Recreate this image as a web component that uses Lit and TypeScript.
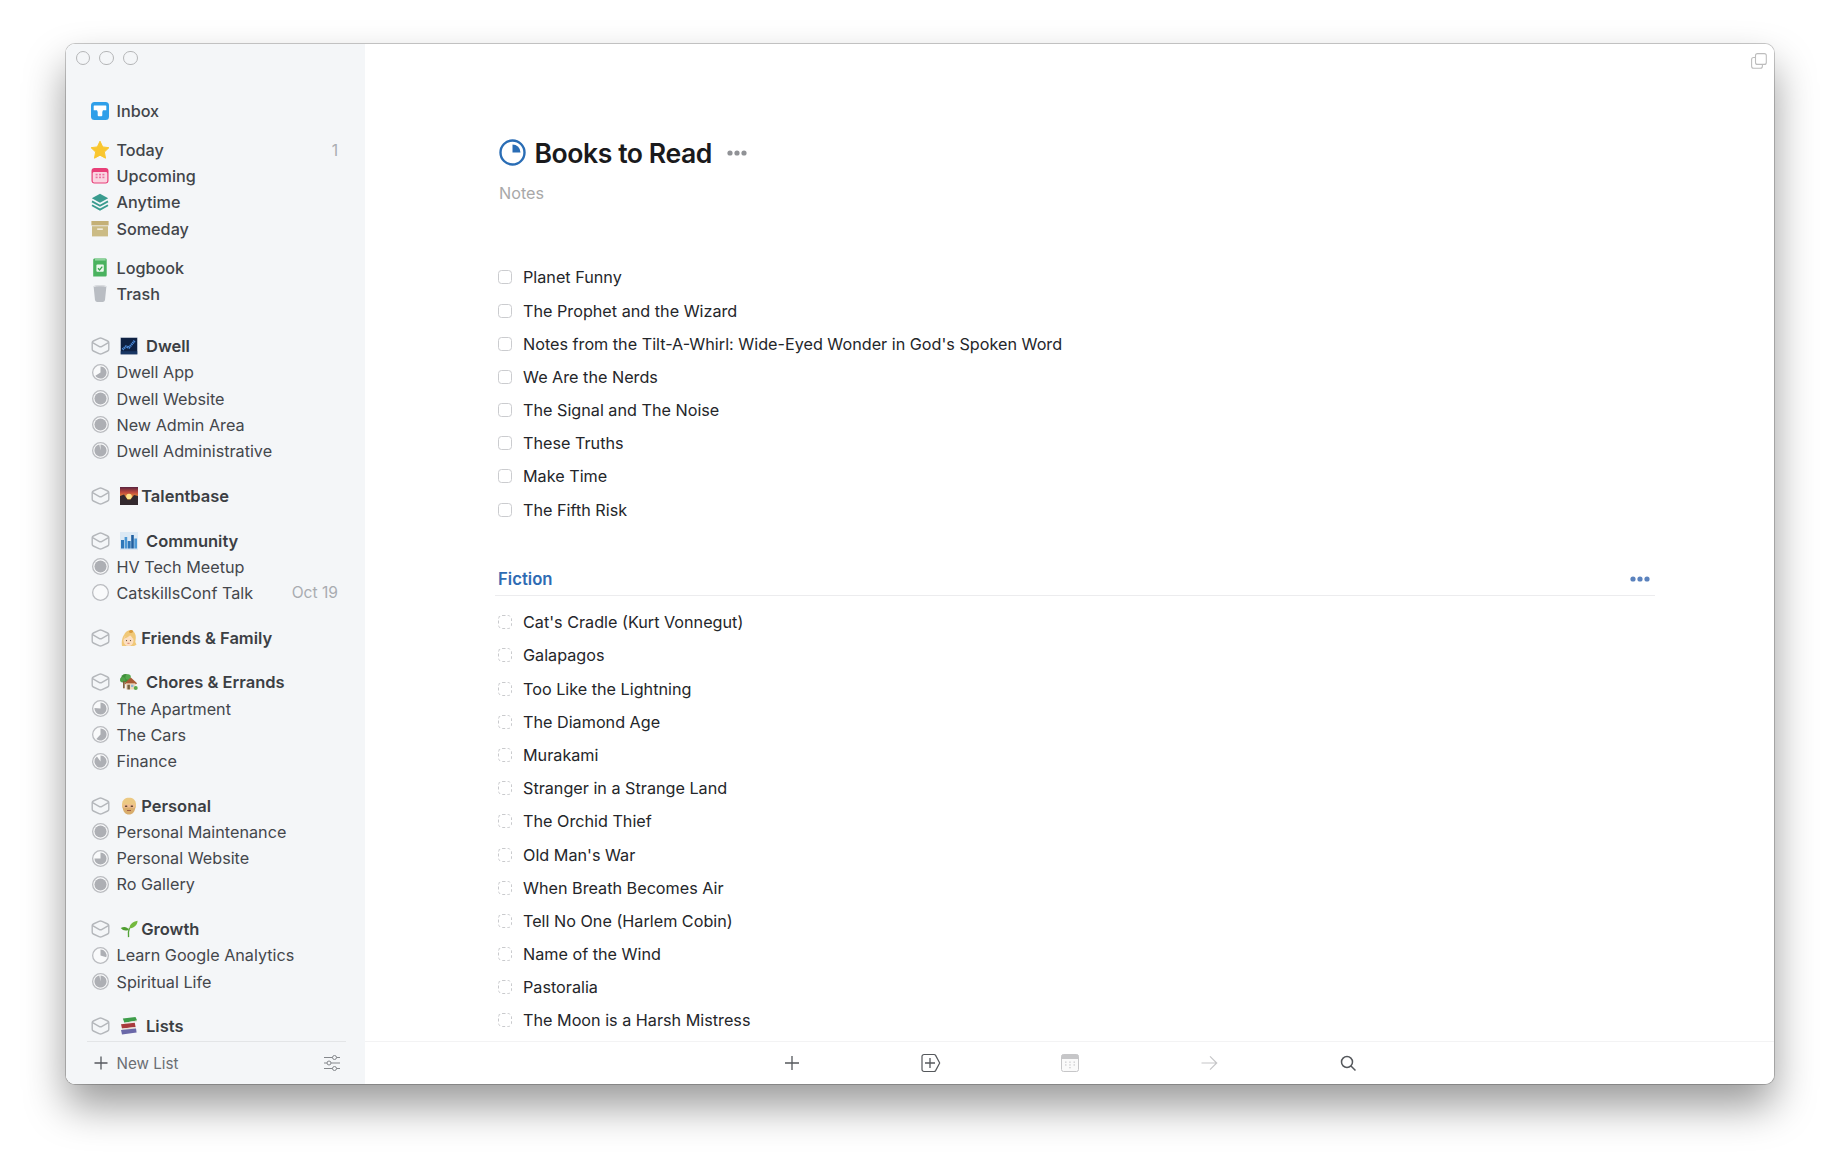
import { LitElement, html, css, svg } from "lit";
import { customElement } from "lit/decorators.js";

const pie = (p: number) => {
  const c = 8, r = 5.7;
  let fill;
  if (p >= 0.995) fill = svg`<circle cx="8" cy="8" r="5.7" fill="#adafb4"/>`;
  else if (p <= 0) fill = svg``;
  else {
    const a = 2 * Math.PI * p;
    const x = c + r * Math.sin(a), y = c - r * Math.cos(a);
    fill = svg`<path d="M8 8V${c - r}A${r} ${r} 0 ${p > 0.5 ? 1 : 0} 1 ${x.toFixed(2)} ${y.toFixed(2)}Z" fill="#adafb4"/>`;
  }
  return html`<svg class="ic16" viewBox="0 0 16 16"><circle cx="8" cy="8" r="7.4" fill="#f9fafb" stroke="#babcc0" stroke-width="1.2"/>${fill}</svg>`;
};

const cube = html`<svg class="cube" viewBox="0 0 19 18" fill="none" stroke="#b4b7bb" stroke-width="1.4" stroke-linejoin="round" stroke-linecap="round"><path d="M8 1.300a3.400 3.400 0 0 1 3 0l5.700 2.700a1.800 1.800 0 0 1 1.100 1.700v6.600a1.800 1.800 0 0 1-1.100 1.700L11 16.700a3.400 3.400 0 0 1-3 0l-5.700-2.700a1.800 1.800 0 0 1-1.100-1.700V5.700a1.800 1.800 0 0 1 1.100-1.700z"/><path d="M1.600 5.600 8 9.300a3 3 0 0 0 3 0l6.400-3.700"/></svg>`;

const navIcons: Record<string, unknown> = {
  inbox: html`<svg class="ic18" viewBox="0 0 18 18"><rect width="18" height="18" rx="3.5" fill="#2f9fe9"/><path d="M3.300 3.400h11.400a.6.6 0 0 1 .6.6v4.300h-3.300l-.7 1.600v3.400a1 1 0 0 1-1 1H7.700a1 1 0 0 1-1-1V9.900l-.7-1.600H2.700V4a.6.6 0 0 1 .6-.6z" fill="#fff"/></svg>`,
  today: html`<svg class="ic20" viewBox="0 0 20 20"><path d="M10 1.200l2.700 5.700 6.200.8-4.500 4.300 1.100 6.200L10 15.200l-5.500 3 1.100-6.200L1.100 7.700l6.200-.8z" fill="#f9c62f" stroke="#f9c62f" stroke-width="1" stroke-linejoin="round"/></svg>`,
  upcoming: html`<svg class="ic18" viewBox="0 0 18 18"><rect x=".5" y="1" width="17" height="15.600" rx="3" fill="#e83f78"/><rect x="1.700" y="5" width="14.600" height="10.400" rx="1.400" fill="#fad5e1"/><g fill="#eb74a2"><rect x="4.600" y="6.800" width="2" height="1.600"/><rect x="8" y="6.800" width="2" height="1.600"/><rect x="11.400" y="6.800" width="2" height="1.600"/><rect x="4.600" y="9.600" width="2" height="1.600"/><rect x="8" y="9.600" width="2" height="1.600"/><rect x="11.400" y="9.600" width="2" height="1.600"/></g></svg>`,
  anytime: html`<svg class="ic18" viewBox="0 0 18 18"><path d="M9 .8l8.200 4.500L9 9.800.8 5.300z" fill="#3a9c8f"/><path d="M1 8.400l8 4.300 8-4.300M1 12.200l8 4.400 8-4.400" fill="none" stroke="#3a9c8f" stroke-width="1.800"/></svg>`,
  someday: html`<svg class="ic18" viewBox="0 0 18 18"><rect x=".4" y="1" width="17.200" height="4.400" fill="#c4b077"/><rect x="1" y="6.200" width="16" height="10.200" fill="#cbbb85"/><rect x="6.200" y="8.400" width="5.600" height="1.500" fill="#f4f1e4"/></svg>`,
  logbook: html`<svg class="ic18t" viewBox="0 0 16 19"><path d="M2 .6h11.500a1.200 1.200 0 0 1 1.200 1.200v15.400a1.200 1.200 0 0 1-1.200 1.200H1.200V1.400z" fill="#4ab25f"/><path d="M3 .6h10.600v2H3z" fill="#8ed39c"/><rect x="4.400" y="6.400" width="7.400" height="7.400" rx="1" fill="#ecf8ee"/><path d="M6 10.200l1.600 1.700 2.700-3.200" fill="none" stroke="#3ba651" stroke-width="1.300"/></svg>`,
  trash: html`<svg class="ic18t" viewBox="0 0 16 18"><path d="M1.600 1.800C4 .4 12 .4 14.400 1.800L13 15.600a2 2 0 0 1-2 1.800H5a2 2 0 0 1-2-1.800z" fill="#b9bdc3"/><path d="M2 2c3-1 9-1 12 0" stroke="#e2e4e7" stroke-width="1" fill="none"/></svg>`,
};

const emoji: Record<string, unknown> = {
  dwell: html`<svg class="emo" viewBox="0 0 18 18"><rect width="18" height="18" fill="#dfe4ec"/><rect x=".8" y=".8" width="16.400" height="16.400" fill="#0e2143"/><path d="M2.500 12.500 6 9.500l3 1L15 3.500" stroke="#4c8ad8" stroke-width="2.400" fill="none" stroke-dasharray="1.300 .6"/><rect x=".8" y="14.200" width="16.400" height="3" fill="#183663"/></svg>`,
  talent: html`<svg class="emo" viewBox="0 0 18 18"><defs><linearGradient id="sk" x1="0" y1="0" x2="0" y2="1"><stop offset="0" stop-color="#5a2340"/><stop offset=".3" stop-color="#bf4a3c"/><stop offset=".65" stop-color="#f7a83a"/></linearGradient></defs><rect width="18" height="18" fill="url(#sk)"/><circle cx="9" cy="9.500" r="2.800" fill="#fde58a"/><path d="M0 9 4 7.500l3.500 5h3L14 8l4 1v9H0z" fill="#33292e"/></svg>`,
  city: html`<svg class="emo" viewBox="0 0 18 18"><rect width="18" height="18" fill="#dce9f4"/><g fill="#2f78b9"><rect x="1" y="8" width="3" height="8.500"/><rect x="4.600" y="5" width="2.600" height="11.500" fill="#4c98d5"/><rect x="7.700" y="9" width="3" height="7.500"/><rect x="11.200" y="3" width="2.600" height="13.500" fill="#205fa0"/><rect x="14.300" y="6.500" width="2.700" height="10" fill="#4c98d5"/></g></svg>`,
  woman: html`<svg class="emo" viewBox="0 0 18 18"><path d="M2 17C1.200 12 2.600 8 4 6 5.400 2.500 9 .4 12 1.600c2.600 1 4 4.400 3.800 7.400l-.5 4 1.200 2.800-2.500 1.200z" fill="#f0c878"/><path d="M8.800 2.500c1.500-1.800 3.400-1.800 4.300-.6.500 1-1.300 2.300-3.300 2.200z" fill="#d99c3f"/><ellipse cx="8.500" cy="11.500" rx="5" ry="5.500" fill="#fcdfc2"/><path d="M3.500 10C5.500 9.300 9 7.800 10.300 6l2.900 4-.5-5-4.700-1.500z" fill="#f0c878"/><circle cx="6.500" cy="11.600" r=".6" fill="#5a4030"/><circle cx="10.500" cy="11.600" r=".6" fill="#5a4030"/><path d="M7.400 14.300h2.200" stroke="#d0685a" stroke-width=".8"/></svg>`,
  house: html`<svg class="emo" viewBox="0 0 20 18"><circle cx="6" cy="4.800" r="4.800" fill="#3f8f3a"/><circle cx="3" cy="6.500" r="3" fill="#4ea247"/><circle cx="9" cy="3.500" r="3" fill="#55a84c"/><rect x="3.400" y="8" width="1.800" height="8" fill="#7b5a36"/><path d="M5 10.500 12 4l7 6.500-1.200 1H6z" fill="#a85b35"/><rect x="6.500" y="10.500" width="10.500" height="6.800" fill="#efd9bd"/><rect x="8.200" y="12" width="2.800" height="5.300" fill="#77603f"/><rect x="12.300" y="12" width="2.600" height="2.600" fill="#8fb7d6"/><circle cx="17.500" cy="15.600" r="2.200" fill="#5ba84c"/></svg>`,
  man: html`<svg class="emo" viewBox="0 0 18 18"><path d="M2 7.500C2.300 2.500 5.300.8 9 .8s6.700 1.700 7 6.700v3H2z" fill="#ecc983"/><path d="M3.400 7.800c3-.4 8-.4 11.200 0v3.200H3.400z" fill="#efbb90"/><path d="M2.500 9.800C2.900 14.800 5.500 17.600 9 17.600s6.100-2.800 6.500-7.800l-2.400 1.400c-.9-.8-7.300-.8-8.200 0z" fill="#d9ad6c"/><rect x="4.900" y="8.600" width="2.500" height="1.300" rx=".6" fill="#5e4630"/><rect x="10.600" y="8.600" width="2.500" height="1.300" rx=".6" fill="#5e4630"/><path d="M7 13.500h4" stroke="#a15a44" stroke-width="1"/></svg>`,
  seed: html`<svg class="emo" viewBox="0 0 20 20"><path d="M9.500 19c-.5-4-.3-7 1-10" stroke="#52a336" stroke-width="1.500" fill="none"/><path d="M10.400 9.500C10.500 5 14 1.500 19.500.7c0 4.800-4 8-9.100 8.800z" fill="#74b93e"/><path d="M9.700 10.700C8 7.600 4.500 6.800.8 9c2.500 3 6 3.600 8.900 1.700z" fill="#4f9e30"/></svg>`,
  books: html`<svg class="emo" viewBox="0 0 18 18"><path d="M2.800 1.500 15.500 0l1.600 3.400-12.700 2.400z" fill="#3e9d4a"/><path d="M4.400 5.800l12.700-2.400-.3 1.300-12 2.100z" fill="#e5e5d8"/><path d="M1 7.300l13.800-1.600.8 4.400L2 11.600z" fill="#a83a3c"/><path d="M2 11.700l13.600-1.600.6 2.400-14 1.600z" fill="#e5e0d8"/><path d="M1 13l15-1.400.6 4L2 17.400z" fill="#6a68a8"/></svg>`,
};

const nav = [
  [["inbox", "Inbox"]],
  [["today", "Today", "1"], ["upcoming", "Upcoming"], ["anytime", "Anytime"], ["someday", "Someday"]],
  [["logbook", "Logbook"], ["trash", "Trash"]],
];

type Area = { name: string; emo: string; tight?: boolean; items: [string, number, string?][] };
const areas: Area[] = [
  { name: "Dwell", emo: "dwell", items: [["Dwell App", 0.66], ["Dwell Website", 1], ["New Admin Area", 1], ["Dwell Administrative", 0.97]] },
  { name: "Talentbase", emo: "talent", tight: true, items: [] },
  { name: "Community", emo: "city", items: [["HV Tech Meetup", 1], ["CatskillsConf Talk", 0, "Oct 19"]] },
  { name: "Friends & Family", emo: "woman", tight: true, items: [] },
  { name: "Chores & Errands", emo: "house", items: [["The Apartment", 0.76], ["The Cars", 0.62], ["Finance", 0.9]] },
  { name: "Personal", emo: "man", tight: true, items: [["Personal Maintenance", 1], ["Personal Website", 0.75], ["Ro Gallery", 1]] },
  { name: "Growth", emo: "seed", tight: true, items: [["Learn Google Analytics", 0.3], ["Spiritual Life", 0.97]] },
  { name: "Lists", emo: "books", items: [] },
];

const books = ["Planet Funny", "The Prophet and the Wizard", "Notes from the Tilt-A-Whirl: Wide-Eyed Wonder in God's Spoken Word", "We Are the Nerds", "The Signal and The Noise", "These Truths", "Make Time", "The Fifth Risk"];
const fiction = ["Cat's Cradle (Kurt Vonnegut)", "Galapagos", "Too Like the Lightning", "The Diamond Age", "Murakami", "Stranger in a Strange Land", "The Orchid Thief", "Old Man's War", "When Breath Becomes Air", "Tell No One (Harlem Cobin)", "Name of the Wind", "Pastoralia", "The Moon is a Harsh Mistress"];

const dots = (color: string) => html`<svg class="dots" viewBox="0 0 20 6" fill="${color}"><circle cx="3" cy="3" r="2.600"/><circle cx="10" cy="3" r="2.600"/><circle cx="17" cy="3" r="2.600"/></svg>`;

@customElement("app-root")
export class AppRoot extends LitElement {
  static styles = css`
    :host { display: block; height: 1172px; background: #fff; overflow: hidden; font-family: Inter, "Noto Sans", sans-serif; }
    .outer { padding: 44px 66px 0; }
    .frame { border-radius: 9px; width: 1708px; box-shadow: 0 0 0 1px rgba(0, 0, 0, .2), 0 22px 42px rgba(0, 0, 0, .4); }
    .window { width: 1708px; height: 1040px; display: flex; border-radius: 9px; overflow: hidden; background: #fff; }
    .side { width: 299px; flex: none; background: #f4f6f8; display: flex; flex-direction: column; }
    .lights { display: flex; gap: 9.300px; padding: 6.500px 0 0 9.500px; height: 14px; margin-bottom: 33.500px; flex: none; }
    .lights i { width: 12.500px; height: 12.500px; border: 1px solid #b4b5b7; border-radius: 50%; }
    .scroll { flex: 1; min-height: 0; overflow: hidden; padding: 0 27px 0 25px; }
    .group { margin-bottom: 12.800px; }
    .group + .group { margin-bottom: 12.800px; }
    .group + .group + .group { margin-bottom: 26.200px; }
    .row { display: flex; align-items: center; height: 26.200px; font-size: 16.200px; color: #42454a; white-space: nowrap; }
    .nav { font-weight: 500; }
    .icol { width: 25.500px; flex: none; display: flex; align-items: center; }
    .ic18 { width: 18px; height: 18px; display: block; }
    .cube { width: 19px; height: 18px; display: block; }
    .ic20 { width: 20px; height: 20px; margin-left: -1px; display: block; }
    .ic18t { width: 16px; height: 19px; margin-left: 1px; display: block; }
    .ic16 { width: 17px; height: 17px; margin-left: 1px; display: block; }
    .count { margin-left: auto; color: #a9acb1; font-size: 15.600px; font-weight: 400; }
    .area { margin-bottom: 18.600px; }
    .hd { font-weight: 600; font-size: 16.500px; color: #3c3f44; }
    .emo { width: 18px; height: 18px; margin: 0 8px 0 3.500px; flex: none; display: block; }
    .tight .emo { margin-right: 3.200px; }
    .pj { font-weight: 400; color: #44474c; }
    .sfoot { height: 43px; flex: none; margin: 0 19px 0 21px; border-top: 1.500px solid #e3e5e7; display: flex; align-items: center; font-size: 15.200px; color: #6b6e73; box-sizing: border-box; padding: 0 5px 0 0; }
    .sfoot .plus { width: 14px; height: 14px; margin: 0 8.500px 0 7px; }
    .sfoot .tune { width: 18px; height: 18px; margin-left: auto; }
    .main { flex: 1; min-width: 0; display: flex; flex-direction: column; }
    .content { flex: 1; min-height: 0; overflow: hidden; padding: 0 119px 0 133px; }
    .top { display: flex; justify-content: flex-end; height: 25px; padding-top: 9px; margin-right: -112px; box-sizing: border-box; }
    .top svg { width: 16px; height: 16px; }
    .title { display: flex; align-items: center; height: 34px; margin-top: 66.700px; }
    .title .ring { width: 27px; height: 27px; margin: 0 8.500px 0 1px; flex: none; }
    h1 { margin: 0; font-size: 26.600px; font-weight: 600; color: #1a1a1c; letter-spacing: -.45px; line-height: 34px; }
    .title .dots { margin-left: 15px; }
    .dots { width: 20px; height: 6px; flex: none; }
    .notes { height: 24px; line-height: 24px; margin: 11.500px 0 55.700px 1px; font-size: 16.200px; color: #a8a8a8; }
    .item { display: flex; align-items: center; height: 33.180px; font-size: 16.200px; color: #24262a; white-space: nowrap; }
    .box { width: 14px; height: 14px; box-sizing: border-box; border: 1.300px solid #cbcccf; border-radius: 3.500px; margin-right: 11px; flex: none; }
    .box.dash { border: 1.100px dashed #c9cacd; border-radius: 4.500px; }
    .fic { display: flex; align-items: center; justify-content: space-between; height: 32px; margin: 36.900px 0 9.600px -3px; padding: 0 5px 0 3px; border-bottom: 1px solid #ececee; font-size: 16.700px; font-weight: 600; color: #2e6bb3; }
    .tools { height: 43px; flex: none; border-top: 1px solid #f3f3f4; display: flex; align-items: center; padding-left: 357.500px; box-sizing: border-box; }
    .tools span { width: 139px; display: flex; justify-content: center; }
    .tools svg { width: 20px; height: 20px; display: block; }
  `;

  render() {
    return html`<div class="outer"><div class="frame"><div class="window">
      <aside class="side">
        <div class="lights"><i></i><i></i><i></i></div>
        <div class="scroll">
          ${nav.map((g) => html`<div class="group">
            ${g.map((r) => html`<div class="row nav"><span class="icol">${navIcons[r[0]]}</span>${r[1]}${r[2] ? html`<span class="count">${r[2]}</span>` : ""}</div>`)}
          </div>`)}
          ${areas.map((a) => html`<div class="area ${a.tight ? "tight" : ""}">
            <div class="row hd"><span class="icol">${cube}</span>${emoji[a.emo]}${a.name}</div>
            ${a.items.map((p) => html`<div class="row pj"><span class="icol">${pie(p[1])}</span>${p[0]}${p[2] ? html`<span class="count">${p[2]}</span>` : ""}</div>`)}
          </div>`)}
        </div>
        <div class="sfoot">
          <svg class="plus" viewBox="0 0 14 14" stroke="#55585d" stroke-width="1.300" fill="none"><path d="M7 .5v13M.5 7h13"/></svg>
          New List
          <svg class="tune" viewBox="0 0 18 18" stroke="#85888c" stroke-width="1" fill="#f4f6f8"><path d="M1 3.500h16M1 9h16M1 14.500h16"/><circle cx="11.500" cy="3.500" r="2"/><circle cx="6" cy="9" r="2"/><circle cx="11.500" cy="14.500" r="2"/></svg>
        </div>
      </aside>
      <main class="main">
        <div class="content">
          <div class="top"><svg viewBox="0 0 16 16" fill="none" stroke="#bdbdbd" stroke-width="1.100"><rect x="4.500" y=".6" width="10.800" height="10.800" rx="2"/><path d="M4.400 4.500H2.600a2 2 0 0 0-2 2v6.800a2 2 0 0 0 2 2h6.800a2 2 0 0 0 2-2v-1.800"/></svg></div>
          <div class="title">
            <svg class="ring" viewBox="0 0 27 27"><circle cx="13.500" cy="13.500" r="12" fill="none" stroke="#2a6db5" stroke-width="2.400"/><path d="M13.500 13.500V5.500a8 8 0 0 1 8 8z" fill="#2a6db5"/></svg>
            <h1>Books to Read</h1>
            ${dots("#909296")}
          </div>
          <div class="notes">Notes</div>
          ${books.map((b) => html`<div class="item"><span class="box"></span>${b}</div>`)}
          <div class="fic">Fiction ${dots("#5b82bd")}</div>
          ${fiction.map((b) => html`<div class="item"><span class="box dash"></span>${b}</div>`)}
        </div>
        <div class="tools">
          <span><svg viewBox="0 0 20 20" stroke="#55585c" stroke-width="1.300" fill="none"><path d="M10 3v14M3 10h14"/></svg></span>
          <span><svg viewBox="0 0 20 20" stroke="#55585c" stroke-width="1.200" fill="none" stroke-linejoin="round"><path d="M3 1.500h10a1.800 1.800 0 0 1 1.600.9L18.700 10l-4.100 7.600a1.800 1.800 0 0 1-1.600.9H3a2 2 0 0 1-2-2v-13a2 2 0 0 1 2-2z"/><path d="M9 5v10M4 10h10" stroke-width="1.300"/></svg></span>
          <span><svg viewBox="0 0 20 20"><rect x="1.500" y="1.500" width="17" height="17" rx="2" fill="#fafafa" stroke="#c6c6c8"/><path d="M1.500 3.300a1.800 1.800 0 0 1 1.800-1.800h13.400a1.800 1.800 0 0 1 1.800 1.800V6H1.500z" fill="#c6c6c8"/><g fill="#cfcfd1"><rect x="5" y="8.500" width="1.500" height="1.300"/><rect x="9.200" y="8.500" width="1.500" height="1.300"/><rect x="13.500" y="8.500" width="1.500" height="1.300"/><rect x="5" y="11.300" width="1.500" height="1.300"/><rect x="9.200" y="11.300" width="1.500" height="1.300"/><rect x="13.500" y="11.300" width="1.500" height="1.300"/><rect x="9.200" y="14" width="1.500" height="1.300"/></g></svg></span>
          <span><svg viewBox="0 0 20 20" stroke="#c6c6c8" stroke-width="1.200" fill="none"><path d="M2.500 10h15M11 3.300 17.700 10 11 16.700"/></svg></span>
          <span><svg viewBox="0 0 20 20" stroke="#55585c" stroke-width="1.500" fill="none"><circle cx="9" cy="9" r="5.500"/><path d="M13 13l4.500 4.500"/></svg></span>
        </div>
      </main>
    </div></div></div>`;
  }
}
